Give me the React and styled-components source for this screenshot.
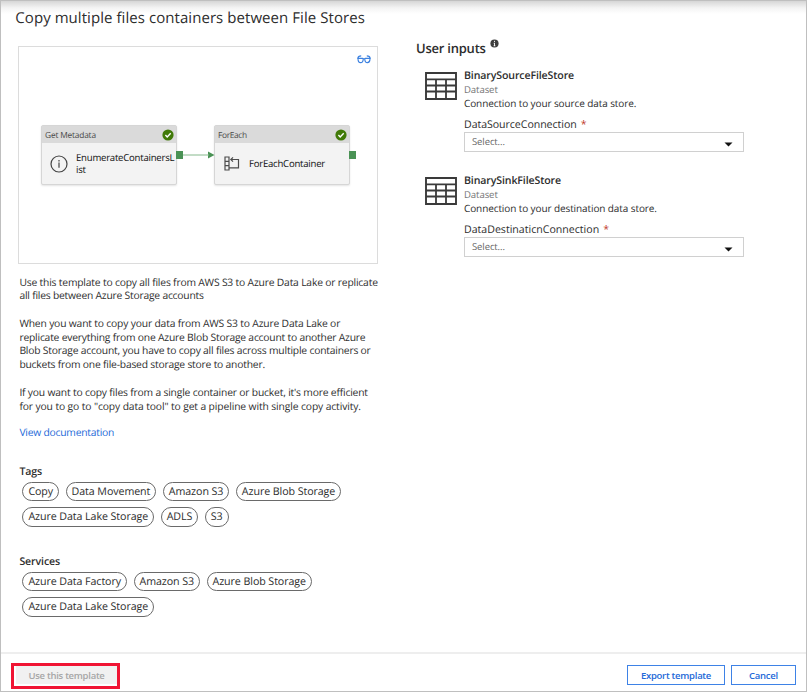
import React from 'react';
import styled, { createGlobalStyle } from 'styled-components';

const GlobalStyle = createGlobalStyle`
  * { box-sizing: border-box; }
  body { margin: 0; background: #fff; }
  button { font: inherit; }
`;

const Dialog = styled.div`
  width: 807px;
  height: 692px;
  display: flex;
  flex-direction: column;
  border: 1px solid #bfbfbf;
  overflow: hidden;
  color: #2d2d2d;
  background: linear-gradient(#d6d6d6, #f4f4f4 7px, #fff 13px);
  font-family: 'Open Sans', 'Noto Sans', sans-serif;
  font-size: 10.3px;
  line-height: 13.78px;
  text-rendering: geometricPrecision;
  white-space: nowrap;
`;

const Title = styled.h1`
  margin: 0;
  padding: 7px 0 0 14.3px;
  height: 45px;
  font-size: 15px;
  line-height: 20px;
  font-weight: 400;
  letter-spacing: 0.06px;
`;

const Content = styled.main`
  flex: 1;
  display: flex;
  align-items: flex-start;
`;

const Overview = styled.section`
  width: 360px;
  margin-left: 17px;
`;

const Canvas = styled.div`
  position: relative;
  height: 218px;
  border: 1px solid #dcdcdc;
  background: #fff;
`;

const PreviewIcon = styled.svg`
  position: absolute;
  right: 6px;
  top: 8px;
`;

const Connector = styled.svg`
  position: absolute;
  left: 157px;
  top: 103px;
`;

const Node = styled.article`
  position: absolute;
  left: ${p => p.$x}px;
  top: 78px;
  width: 136px;
  height: 60px;
  border: 1px solid #d6d6d6;
  border-radius: 2px;
  background: #f3f3f3;
  box-shadow: 0 1px 2px #e4e4e4;
`;

const NodeHeader = styled.header`
  display: flex;
  align-items: center;
  justify-content: space-between;
  height: 17px;
  padding: 2px 2px 0 3px;
  background: #dadada;
  color: #4a4a4a;
  font-size: 8.4px;
  letter-spacing: ${p => p.$spacing}px;
  svg { margin-top: -1px; }
`;

const NodeBody = styled.div`
  display: flex;
  align-items: center;
  height: 41px;
  padding-top: 1px;
  padding-left: ${p => p.$inset}px;
  gap: ${p => p.$gap}px;
  color: #111;
  font-size: 9.6px;
  line-height: 12.5px;
  letter-spacing: -0.24px;
  svg { margin-top: -1px; }
`;

const Description = styled.div`
  margin: 12.5px -20px 0 0;
  padding-left: 1.4px;
`;

const Paragraph = styled.p`
  margin: 0 0 13.78px;
`;

const Line = styled.span`
  display: block;
  letter-spacing: ${p => p.$spacing}px;
`;

const DocLink = styled.a`
  color: #2369d8;
  letter-spacing: -0.22px;
  display: block;
  margin-top: -0.6px;
`;

const Group = styled.section`
  margin-top: ${p => p.$top}px;
`;

const GroupTitle = styled.h2`
  margin: 0 0 2.6px 1.4px;
  font-size: 10.6px;
  line-height: 14px;
  font-weight: 600;
  letter-spacing: -0.12px;
`;

const Pills = styled.div`
  display: flex;
  flex-wrap: wrap;
  gap: 6px 6.5px;
  padding-left: 4.4px;
  width: 332px;
`;

const Pill = styled.span`
  height: 19.5px;
  padding: 0 5px;
  border: 1px solid #6a6a6a;
  border-radius: 10px;
  font-size: 10.7px;
  line-height: 18px;
  letter-spacing: -0.09px;
`;

const Inputs = styled.section`
  width: 328px;
  margin-left: 38px;
`;

const InputsTitle = styled.h2`
  display: flex;
  gap: 4px;
  margin: -7px 0 11.6px;
  padding-left: 0;
  font-size: 13px;
  line-height: 18px;
  font-weight: 600;
  letter-spacing: -0.23px;
`;

const Dataset = styled.div`
  display: flex;
  height: 105px;
  padding-left: 9px;
  gap: 7px;
  & > svg { margin-top: 3px; }
`;

const DatasetInfo = styled.div`
  width: 280px;
  font-size: 10px;
  letter-spacing: -0.1px;
`;

const DatasetName = styled.h3`
  margin: 0;
  font-size: 10.6px;
  line-height: 14px;
  font-weight: 600;
  letter-spacing: -0.13px;
`;

const DatasetKind = styled.div`
  color: #767676;
  font-size: 9.6px;
  line-height: 14px;
`;

const Label = styled.label`
  display: block;
  margin-top: 8px;
  font-size: 10.6px;
  line-height: 14px;
  letter-spacing: ${p => p.$spacing}px;
`;

const Required = styled.span`
  margin-left: 4px;
  color: #c0392b;
`;

const Select = styled.div`
  display: flex;
  align-items: center;
  justify-content: space-between;
  height: 20px;
  padding: 0 10px 0 7px;
  border: 1px solid #d0d0d0;
  background: #fff;
  color: #666;
  font-size: 9.5px;
  svg { margin-top: 4px; }
`;

const Footer = styled.footer`
  display: flex;
  align-items: flex-start;
  height: 39px;
  padding: 11px 10px 0;
  border-top: 2px solid #eee;
`;

const Highlight = styled.div`
  width: 109px;
  height: 26px;
  margin-top: -2px;
  margin-right: auto;
  border: 3px solid #f01433;
  padding: 0 2px 2px;
`;

const Button = styled.button`
  width: ${p => p.$width}px;
  height: 20px;
  margin-left: 6px;
  padding: 1px 0 0;
  border: 1px solid #3e82e6;
  background: #fff;
  color: #2369d8;
  font-size: 9.5px;
  line-height: 16px;
  font-weight: 600;
  letter-spacing: -0.27px;
`;

const DisabledButton = styled(Button)`
  height: 18px;
  margin: 0;
  padding: 2px 0 0;
  border: 0;
  background: #f1f1f1;
  color: #a6a6a6;
`;

const Check = () => (
  <svg width="12" height="12" viewBox="0 0 12 12">
    <circle cx="6" cy="6" r="5.6" fill="#417a08" />
    <path d="M3.4 6.1 5.2 7.9 8.7 4.3" fill="none" stroke="#fff" strokeWidth="1.4" />
  </svg>
);

const Glasses = () => (
  <PreviewIcon width="14" height="10" viewBox="0 0 14 10" fill="none" stroke="#3d82e0" strokeWidth="1.2">
    <path d="M.8 4.2V3.3C1 1.6 2.2.8 4.2.8M13.2 4.2V3.3C13 1.6 11.8.8 9.8.8M.8 3.4h4.8L7 4.1l1.4-.7h4.8" />
    <path d="M1.1 4.3c0 2.2.9 3.4 2.5 3.4S6.1 6.2 6.2 4.2M12.9 4.3c0 2.2-.9 3.4-2.5 3.4S7.9 6.2 7.8 4.2" />
  </PreviewIcon>
);

const InfoRing = () => (
  <svg width="18" height="18" viewBox="0 0 18 18" fill="none" stroke="#444" strokeWidth="1.2">
    <circle cx="9" cy="9" r="8" />
    <path d="M9 7.5v5.3M9 5v1.4" />
  </svg>
);

const LoopIcon = () => (
  <svg width="16" height="15" viewBox="0 0 16 15" fill="none" stroke="#4c4c4c" strokeWidth="1.2">
    <path d="M1 1h4v13H1zM1 5.3h4M1 9.6h4M5 11.8h9.5V3.5H7M9 1.3 6.8 3.5 9 5.7" />
  </svg>
);

const TableIcon = () => (
  <svg width="32" height="28" viewBox="0 0 32 28" fill="none" stroke="#3a3a3a">
    <path d="M1 1h30v26H1zM1 7.4h30" strokeWidth="1.9" />
    <path d="M1 13.5h30M1 19.5h30M11 7.4V27M21 7.4V27" strokeWidth="1.8" />
  </svg>
);

const InfoDot = () => (
  <svg width="9" height="9" viewBox="0 0 9 9">
    <circle cx="4.5" cy="4.5" r="4.1" fill="#3d3d3d" />
    <path d="M4.5 4v3M4.5 1.8v1.3M3.7 4.2h.8M3.6 6.8h1.8" stroke="#fff" strokeWidth=".9" />
  </svg>
);

const Caret = () => (
  <svg width="9" height="5" viewBox="0 0 9 5">
    <path d="M.5.5h8L4.5 4.6z" fill="#111" />
  </svg>
);

const PARAGRAPHS = [
  [
    ['Use this template to copy all files from AWS S3 to Azure Data Lake or replicate', -0.18],
    ['all files between Azure Storage accounts', -0.21],
  ],
  [
    ['When you want to copy your data from AWS S3 to Azure Data Lake or', -0.17],
    ['replicate everything from one Azure Blob Storage account to another Azure', -0.2],
    ['Blob Storage account, you have to copy all files across multiple containers or', -0.19],
    ['buckets from one file-based storage store to another.', -0.2],
  ],
  [
    ["If you want to copy files from a single container or bucket, it's more efficient", -0.18],
    ['for you to go to "copy data tool" to get a pipeline with single copy activity.', -0.11],
  ],
];

const TAGS = ['Copy', 'Data Movement', 'Amazon S3', 'Azure Blob Storage', 'Azure Data Lake Storage', 'ADLS', 'S3'];
const SERVICES = ['Azure Data Factory', 'Amazon S3', 'Azure Blob Storage', 'Azure Data Lake Storage'];

function PillGroup({ title, items, top }) {
  return (
    <Group $top={top}>
      <GroupTitle>{title}</GroupTitle>
      <Pills>{items.map(item => <Pill key={item}>{item}</Pill>)}</Pills>
    </Group>
  );
}

function DatasetInput({ name, description, label, spacing }) {
  return (
    <Dataset>
      <TableIcon />
      <DatasetInfo>
        <DatasetName>{name}</DatasetName>
        <DatasetKind>Dataset</DatasetKind>
        <div>{description}</div>
        <Label $spacing={spacing}>{label}<Required>*</Required></Label>
        <Select>Select...<Caret /></Select>
      </DatasetInfo>
    </Dataset>
  );
}

export default function App() {
  return (
    <>
      <GlobalStyle />
      <Dialog>
        <Title>Copy multiple files containers between File Stores</Title>
        <Content>
          <Overview>
            <Canvas>
              <Glasses />
              <Node $x={22}>
                <NodeHeader $spacing={-0.2}>Get Metadata<Check /></NodeHeader>
                <NodeBody $inset={8} $gap={8}>
                  <InfoRing />
                  <div>EnumerateContainersL<br />ist</div>
                </NodeBody>
              </Node>
              <Node $x={195}>
                <NodeHeader $spacing={-0.36}>ForEach<Check /></NodeHeader>
                <NodeBody $inset={9} $gap={9}>
                  <LoopIcon />
                  <div>ForEachContainer</div>
                </NodeBody>
              </Node>
              <Connector width="182" height="10" viewBox="0 0 182 10">
                <path d="M0 1h7v8H0zM173 1h7v8h-7zM32 1.5 38.5 5l-6.5 3.5z" fill="#4a9255" />
                <path d="M7 5h26" stroke="#86b98d" />
              </Connector>
            </Canvas>
            <Description>
              {PARAGRAPHS.map((lines, i) => (
                <Paragraph key={i}>
                  {lines.map(([text, spacing]) => <Line key={text} $spacing={spacing}>{text}</Line>)}
                </Paragraph>
              ))}
              <DocLink>View documentation</DocLink>
            </Description>
            <PillGroup title="Tags" items={TAGS} top={24} />
            <PillGroup title="Services" items={SERVICES} top={28.4} />
          </Overview>
          <Inputs>
            <InputsTitle>User inputs<InfoDot /></InputsTitle>
            <DatasetInput
              name="BinarySourceFileStore"
              description="Connection to your source data store."
              label="DataSourceConnection"
              spacing={-0.05}
            />
            <DatasetInput
              name="BinarySinkFileStore"
              description="Connection to your destination data store."
              label="DataDestinaticnConnection"
              spacing={0}
            />
          </Inputs>
        </Content>
        <Footer>
          <Highlight>
            <DisabledButton $width={101} disabled>Use this template</DisabledButton>
          </Highlight>
          <Button $width={98}>Export template</Button>
          <Button $width={65}>Cancel</Button>
        </Footer>
      </Dialog>
    </>
  );
}
